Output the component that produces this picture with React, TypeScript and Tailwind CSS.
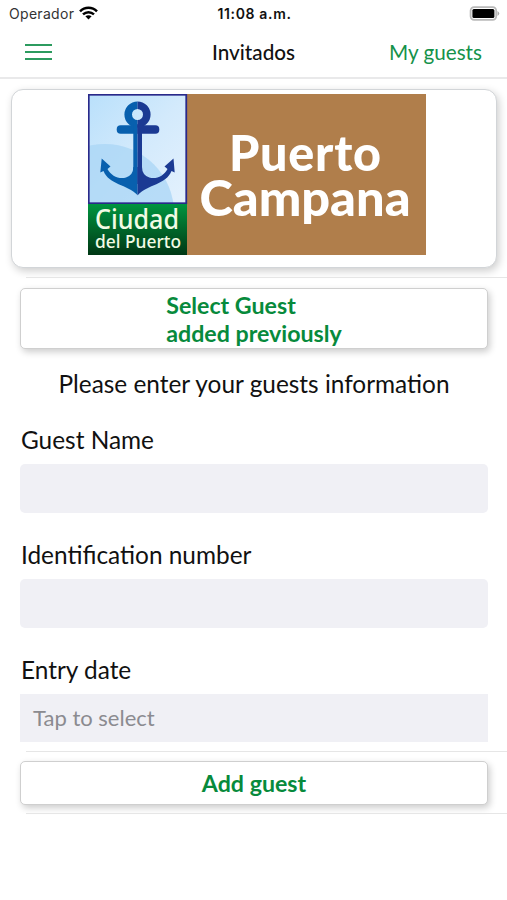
import React from "react";

function Anchor() {
  return (
    <g>
      <circle cx="49.500" cy="20.500" r="9.300" fill="none" stroke="currentColor" strokeWidth="7.600" />
      <rect x="28.700" y="31.200" width="42.600" height="8.600" rx="4" />
      <rect x="45.300" y="30" width="8.700" height="60" />
      <path d="M13.700 64.500 L22.500 72.500 L19.500 75 C23 82 31 85.500 38 83.500 Q45.300 81 45.300 73 H54 Q54 81 61.300 83.500 C68.300 85.500 76 82 79.500 75 L76.500 72.500 L85.500 64.500 L86.700 78.500 L83.500 77 C78 91 60 90 49.700 101.300 C39 90 21 91 15.500 77 L12.300 78.500 Z" />
    </g>
  );
}

function Logo() {
  return (
    <svg className="block h-[161px] w-[338px]" viewBox="0 0 338 161" role="img" aria-label="Puerto Campana">
      <defs>
        <linearGradient id="sky" x1="0" y1="0" x2="1" y2="1">
          <stop offset="0" stopColor="#b9e0fb" />
          <stop offset="0.5" stopColor="#d3eafc" />
          <stop offset="1" stopColor="#e4f1fd" />
        </linearGradient>
        <linearGradient id="grass" x1="0" y1="0" x2="0" y2="1">
          <stop offset="0" stopColor="#009540" />
          <stop offset="0.4" stopColor="#006f2e" />
          <stop offset="1" stopColor="#003714" />
        </linearGradient>
        <clipPath id="left"><rect x="0" y="0" width="49.500" height="110" /></clipPath>
        <clipPath id="right"><rect x="49.500" y="0" width="50" height="110" /></clipPath>
        <clipPath id="frame"><rect x="1" y="1" width="97" height="108" /></clipPath>
      </defs>
      <rect width="338" height="161" fill="#b07e4b" />
      <rect width="99" height="110" fill="url(#sky)" />
      <circle cx="17" cy="119" r="69" fill="#a9d6f6" opacity="0.75" clipPath="url(#frame)" />
      <rect x="0.75" y="0.75" width="97.500" height="108.500" fill="none" stroke="#29298a" strokeWidth="1.800" />
      <g clipPath="url(#left)" className="text-[#0860ae]" fill="currentColor"><Anchor /></g>
      <g clipPath="url(#right)" className="text-[#1b3a93]" fill="currentColor"><Anchor /></g>
      <rect y="110" width="99" height="51" fill="url(#grass)" />
      <g className="font-['Noto_Sans']" fill="#f2fbe4">
        <text x="7" y="134.500" fontSize="26.500" fontWeight="500" textLength="84" lengthAdjust="spacingAndGlyphs">Ciudad</text>
        <text x="7" y="153.500" fontSize="17.500" fontWeight="500" textLength="86" lengthAdjust="spacingAndGlyphs">del Puerto</text>
      </g>
      <g className="font-[Lato]" fill="#fff" fontWeight="900" fontSize="48.500">
        <text x="141" y="76.500" textLength="152" lengthAdjust="spacing">Puerto</text>
        <text x="111.500" y="121.700" textLength="211" lengthAdjust="spacingAndGlyphs">Campana</text>
      </g>
    </svg>
  );
}

function StatusBar() {
  return (
    <div className="grid h-7 grid-cols-3 items-center pl-[9px] pr-[7px] font-[Inter,sans-serif]">
      <div className="flex items-center gap-[5px]">
        <span className="text-[14px] leading-7 tracking-[0.3px] text-[#333]">Operador</span>
        <svg className="-mt-[2px] h-[14px] w-[19px]" viewBox="0 0 19 14" fill="none" stroke="#000" strokeWidth="2.500">
          <path d="M1 5.400 C5.800 0.600 13.200 0.600 18 5.400" />
          <path d="M4 8.400 C7.200 5.400 11.800 5.400 15 8.400" />
          <path d="M6.400 10.300 C8.200 8.900 10.800 8.900 12.600 10.300 L9.500 13.500 Z" fill="#000" stroke="none" />
        </svg>
      </div>
      <span className="whitespace-nowrap text-center text-[14px] font-semibold leading-7 tracking-[0.65px]">11:08 a.m.</span>
      <svg className="-mt-[2px] ml-auto h-[15px] w-[31px]" viewBox="0 0 31 15">
        <rect x="1.600" y="1.200" width="25.600" height="12.600" rx="3.500" fill="#fff" stroke="#b9b9b9" strokeWidth="1.800" />
        <rect x="3.400" y="3" width="22" height="9" rx="1.500" />
        <path d="M28.500 5 Q32 7.500 28.500 10 Z" fill="#aaa" />
      </svg>
    </div>
  );
}

function Divider() {
  return <div className="ml-[26px] h-px bg-[#e6e6e6]" />;
}

function Field({ label }: { label: string }) {
  return (
    <label className="block">
      <span className="block h-[38px] pl-px text-[24.400px] leading-7">{label}</span>
      <input className="block h-[49px] w-full rounded-[5px] bg-[#f0f0f5] px-3 text-[22px] outline-none" />
    </label>
  );
}

export default function App() {
  return (
    <div className="flex h-[900px] w-[507px] flex-col overflow-hidden bg-white font-[Lato,sans-serif] text-[#111]">
      <StatusBar />
      <header className="grid h-[51px] grid-cols-[1fr_auto_1fr] items-center border-b-2 border-[#e9e9ea] pb-px pl-[25px] pr-[25px]">
        <button aria-label="Menu" className="flex w-[27px] flex-col gap-[5px]">
          <span className="h-[2px] bg-[#2c9b5f]" />
          <span className="h-[2px] bg-[#2c9b5f]" />
          <span className="h-[2px] bg-[#2c9b5f]" />
        </button>
        <h1 className="text-[20.700px] font-medium leading-6">Invitados</h1>
        <button className="justify-self-end text-[20.700px] leading-6 text-[#15924a]">My guests</button>
      </header>
      <div className="mt-[10px] ml-[11px] flex h-[179px] w-[486px] justify-center rounded-[12px] border border-[#d2d5d8] bg-white pt-1 pl-[5px] shadow-[2px_3px_8px_rgba(0,0,0,0.2)]">
        <Logo />
      </div>
      <div className="mt-[9px]"><Divider /></div>
      <main className="mt-[10px] flex flex-col px-5 pr-[19px]">
        <button className="flex h-[61px] items-center justify-center rounded-[5px] border border-[#cfcfcf] bg-white text-left text-[23.200px] font-bold leading-7 text-[#078a3c] shadow-[2px_3px_7px_rgba(0,0,0,0.2)]">
          <span>Select Guest<br />added previously</span>
        </button>
        <p className="mt-[21px] text-center text-[24.400px] leading-7">Please enter your guests information</p>
        <div className="mt-[28px] flex flex-col gap-7">
          <Field label="Guest Name" />
          <Field label="Identification number" />
          <div>
            <div className="h-[38px] pl-px text-[24.400px] leading-7">Entry date</div>
            <button className="block h-12 w-full bg-[#f0f0f5] px-[13px] pb-[2px] text-left text-[22px] text-[#8b8b90]">Tap to select</button>
          </div>
        </div>
      </main>
      <div className="mt-[9px]"><Divider /></div>
      <button className="mt-[9px] ml-5 flex h-11 w-[468px] items-center justify-center rounded-[5px] border border-[#cfcfcf] bg-white text-[23.200px] font-bold text-[#078a3c] shadow-[2px_3px_7px_rgba(0,0,0,0.2)]">
        Add guest
      </button>
      <div className="mt-2"><Divider /></div>
    </div>
  );
}
